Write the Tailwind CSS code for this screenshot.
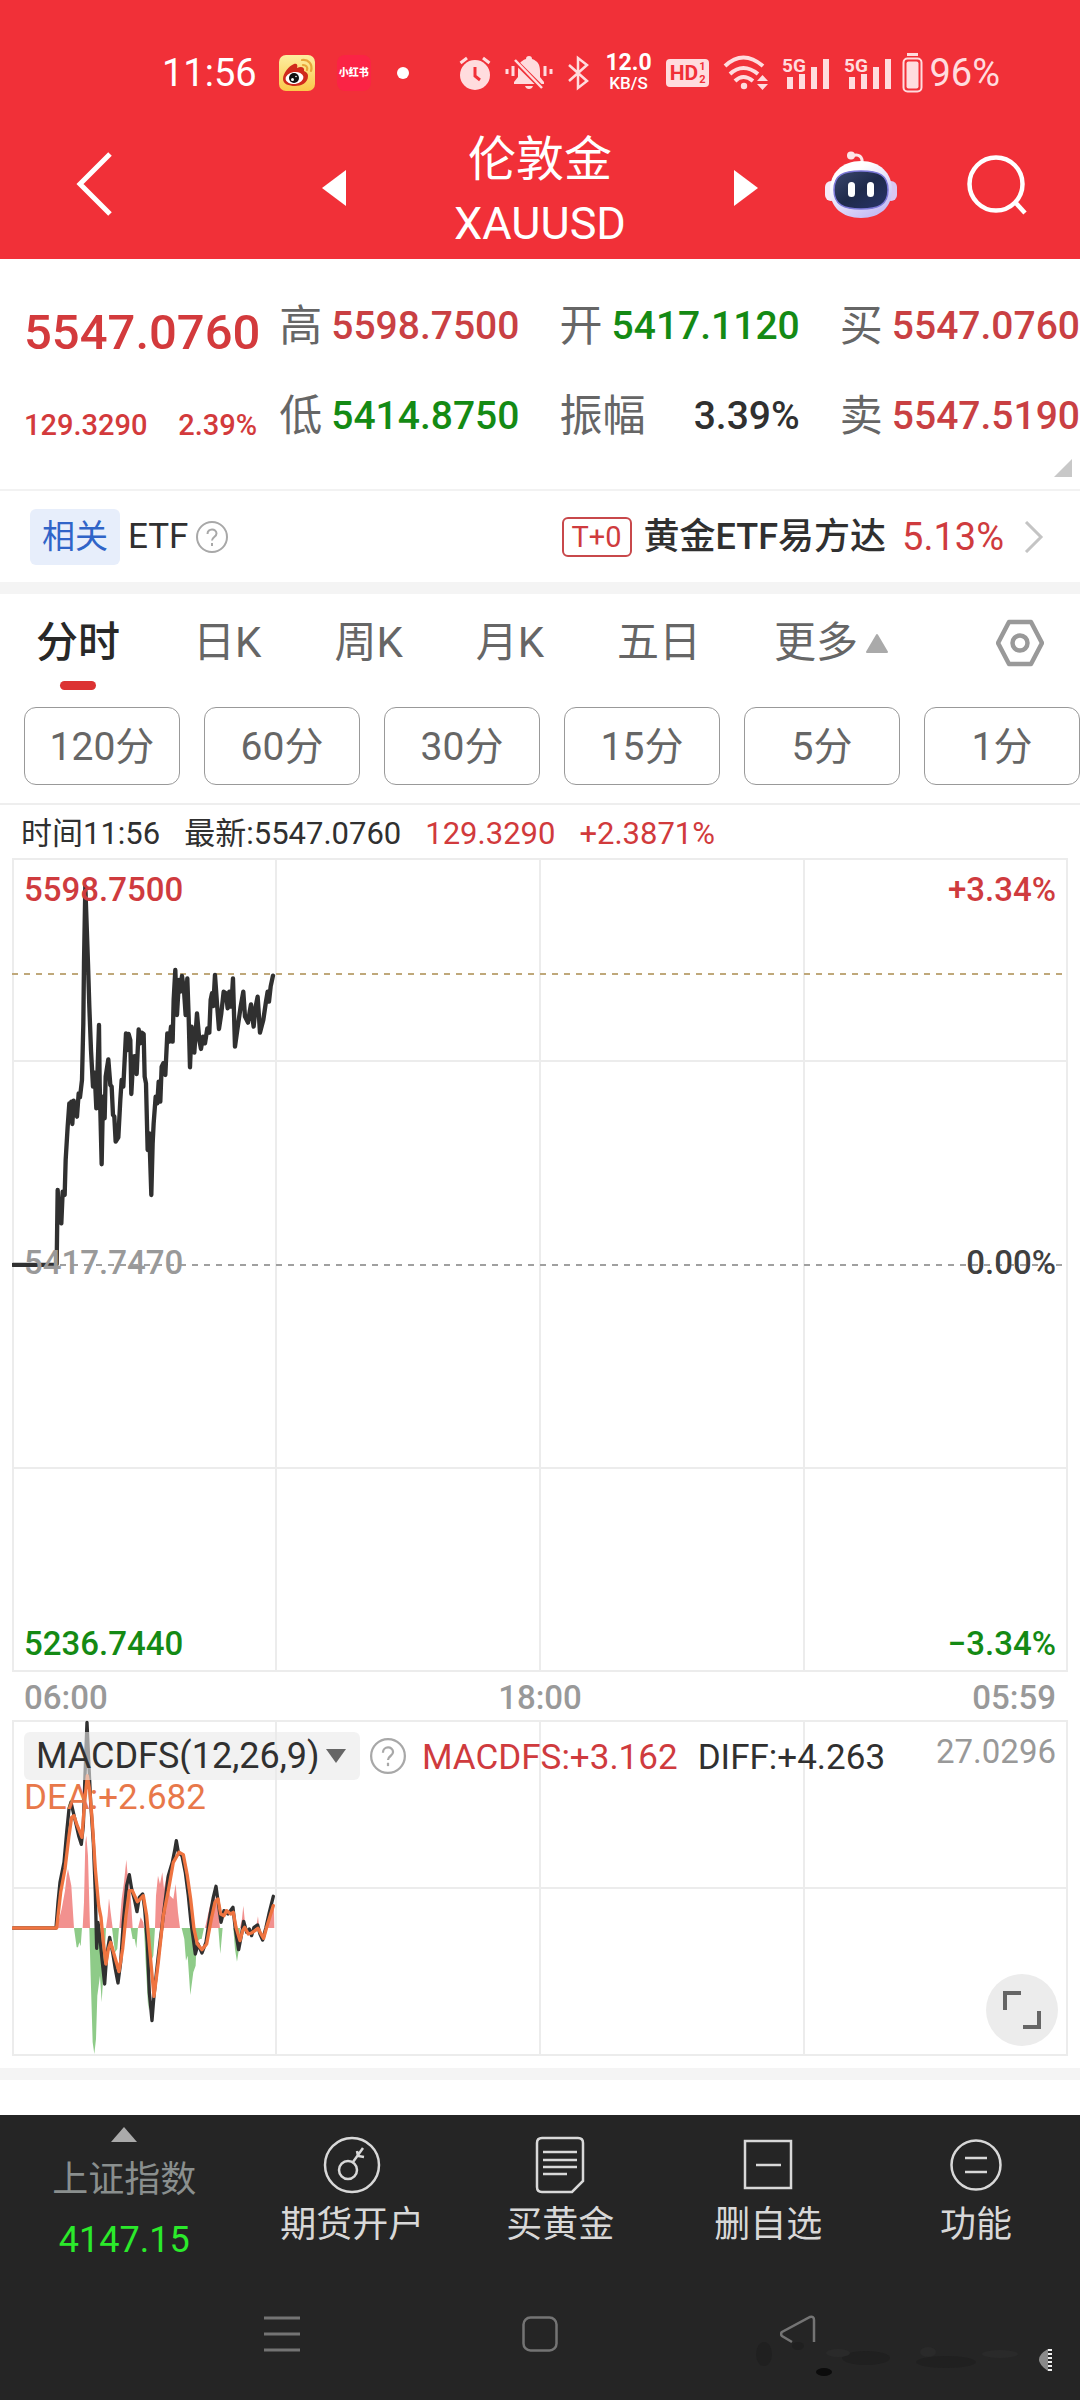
<!DOCTYPE html>
<html lang="zh-CN">
<head>
<meta charset="utf-8">
<meta name="viewport" content="width=device-width, initial-scale=1">
<title>伦敦金 XAUUSD</title>
<script src="https://cdn.jsdelivr.net/npm/@tailwindcss/browser@4"></script>
</head>
<body class="flex min-h-screen flex-col overflow-x-hidden bg-white font-['Roboto','Noto_Sans_CJK_SC',sans-serif] text-[#303030]">

<header class="bg-[#f13038] text-white">
  <!-- status bar -->
  <div class="flex h-[122px] items-center justify-between pt-6 pr-[80px] pl-[162px]">
    <div class="flex items-center gap-[22px]">
      <span class="text-[38px] leading-12">11:56</span>
      <svg class="size-9" viewBox="0 0 36 36">
        <defs><linearGradient id="wb" x1="0" y1="0" x2="0" y2="1"><stop offset="0" stop-color="#fdeea0"/><stop offset="1" stop-color="#fbc84a"/></linearGradient></defs>
        <rect width="36" height="36" rx="7" fill="url(#wb)"/>
        <path d="M4 24c0-6 6-13 11-15 3-1 4 1 3 4 4-2 8-1 7 3 3 1 4 3 4 5 0 7-7 10-13 10S4 29 4 24z" fill="#d02a1c"/>
        <ellipse cx="15.500" cy="23" rx="9" ry="6" fill="#fff" transform="rotate(-8 15.500 23)"/>
        <circle cx="15" cy="23" r="5" fill="#111"/><circle cx="13.500" cy="24.500" r="1.500" fill="#fff"/><circle cx="17" cy="21.500" r=".8" fill="#fff"/>
        <path d="M23 5c6-1 11 4 9 11M24 10c3 0 5 2 4 5" fill="none" stroke="#e7a63a" stroke-width="2.200" stroke-linecap="round"/>
      </svg>
      <span class="grid h-9 w-[34px] place-items-center rounded-lg bg-[#fb2345] text-[10px] leading-3 font-black">小红书</span>
      <span class="ml-1 size-3 rounded-full bg-white"></span>
    </div>
    <div class="flex items-center gap-3.5 text-[#ffdcde]">
      <svg class="h-9 w-8" viewBox="0 0 32 36" fill="currentColor">
        <circle cx="16" cy="20" r="15"/><path d="M1.500 8 8 3M30.500 8 24 3" stroke="currentColor" stroke-width="3"/>
        <path d="M16 12v9l5 4" fill="none" stroke="#f13038" stroke-width="3"/>
      </svg>
      <svg class="h-9 w-12" viewBox="0 0 48 36" fill="currentColor">
        <path d="M24 1c2 0 3 1 3 3 6 2 8 6 8 12v6l4 5v2H9v-2l4-5v-6c0-6 2-10 8-12 0-2 1-3 3-3zM20 31h8q-1 3-4 3t-4-3z"/>
        <path d="M8 4 38 34" stroke="#f13038" stroke-width="5"/><path d="M10 5 37 33" stroke="currentColor" stroke-width="2.500"/>
        <path d="M2 14v5M8 11v10M40 11v10M46 14v5" stroke="currentColor" stroke-width="3"/>
      </svg>
      <svg class="h-9 w-6" viewBox="0 0 24 36" fill="none" stroke="currentColor" stroke-width="2.500"><path d="M2 10 20 26 11 33V3l9 7L2 26"/></svg>
      <div class="text-center text-white">
        <div class="text-[23px] leading-5 font-bold">12.0</div><div class="text-[17px] leading-5 font-medium">KB/S</div>
      </div>
      <div class="flex h-7 items-center gap-px rounded-sm bg-[#ffdcde] px-1 text-[#f13038]">
        <span class="text-[21px] leading-7 font-bold">HD</span>
        <span class="flex flex-col text-[11px] leading-[13px] font-bold"><span>1</span><span>2</span></span>
      </div>
      <svg class="h-9 w-[45px]" viewBox="0 0 45 36" fill="none" stroke="currentColor" stroke-width="4">
        <path d="M2 11q18-17 38 0M7 19q13-12 28 0M12 26q8-8 18 0"/><circle cx="21" cy="31" r="3.200" fill="currentColor" stroke="none"/>
        <path d="M34 26h11l-5.500-6zM34 29h11l-5.500 6z" fill="currentColor" stroke="none"/>
      </svg>
      <svg class="h-9 w-12 overflow-visible" viewBox="0 0 48 36" fill="currentColor">
        <text x="0" y="17" font-size="19" font-weight="700">5G</text>
        <path d="M5 22h6v12H5zM17 19h6v15h-6zM29 12h6v22h-6zM41 4h6v30h-6z"/>
      </svg>
      <svg class="h-9 w-12 overflow-visible" viewBox="0 0 48 36" fill="currentColor">
        <text x="0" y="17" font-size="19" font-weight="700">5G</text>
        <path d="M5 22h6v12H5zM17 19h6v15h-6zM29 12h6v22h-6zM41 4h6v30h-6z"/>
      </svg>
      <div class="-ml-1 flex items-center gap-1.5">
        <svg class="h-10 w-[21px]" viewBox="0 0 21 40"><path d="M5 1.500h11" stroke="currentColor" stroke-width="3"/><rect x="1.500" y="5.500" width="18" height="33" rx="4" fill="none" stroke="currentColor" stroke-width="2"/><rect x="4.500" y="8.500" width="12" height="27" rx="2" fill="currentColor"/></svg>
        <span class="text-[38px] leading-12">96%</span>
      </div>
    </div>
  </div>
  <!-- title bar -->
  <div class="grid h-[137px] grid-cols-[28%_1fr_28%] items-start">
    <div class="pt-[29px] pl-[76px]">
      <button aria-label="返回" class="block"><svg class="h-[66px] w-9" viewBox="0 0 36 66" fill="none" stroke="#fff" stroke-width="5"><path d="M34 3 4 33l30 30"/></svg></button>
    </div>
    <div class="flex items-start justify-between px-5">
      <button aria-label="上一个" class="mt-12"><svg class="h-9 w-6" viewBox="0 0 24 36"><path d="M24 0v36L0 18z" fill="#fff"/></svg></button>
      <h1 class="pt-1.5 text-center"><span class="block text-[48px] leading-16">伦敦金</span><span class="block text-[45px] leading-16">XAUUSD</span></h1>
      <button aria-label="下一个" class="mt-12"><svg class="h-9 w-6" viewBox="0 0 24 36"><path d="M0 0v36l24-18z" fill="#fff"/></svg></button>
    </div>
    <div class="flex items-center justify-between pt-7 pr-[52px] pl-[46px]">
      <button aria-label="智能助手"><svg class="h-[68px] w-[74px]" viewBox="0 0 74 68">
        <defs><linearGradient id="rb" x1="0" y1="0" x2=".6" y2="1"><stop offset=".3" stop-color="#fff"/><stop offset="1" stop-color="#c6bdf5"/></linearGradient>
        <linearGradient id="rf" x1="0" y1="0" x2="1" y2="1"><stop offset="0" stop-color="#3b486e"/><stop offset=".5" stop-color="#1f2a4b"/><stop offset="1" stop-color="#27336a"/></linearGradient></defs>
        <path d="M28 6c7-3 11 1 10 8" fill="none" stroke="#fde6e8" stroke-width="3"/><circle cx="27" cy="5.500" r="4" fill="#fde6e8"/>
        <rect x="1" y="31" width="12" height="20" rx="6" fill="#f6e9f7"/><rect x="61" y="31" width="12" height="20" rx="6" fill="#d9c6f2"/>
        <path d="M37 11c19 0 31 12 31 29S56 68 37 68 6 57 6 40 18 11 37 11z" fill="url(#rb)"/>
        <path d="M37 21c18 0 27 4 27 19S54 59 37 59 10 55 10 40s9-19 27-19z" fill="url(#rf)" stroke="#7c78d8" stroke-width="1.500"/>
        <rect x="24" y="32" width="7" height="15" rx="3.500" fill="#fff"/><rect x="43" y="32" width="7" height="15" rx="3.500" fill="#fff"/>
      </svg></button>
      <button aria-label="搜索"><svg class="size-[62px]" viewBox="0 0 62 62" fill="none" stroke="#fff" stroke-width="4.500"><circle cx="30" cy="31" r="26.500"/><path d="m49 49 10 11"/></svg></button>
    </div>
  </div>
</header>

<main class="flex-1">
  <!-- quote -->
  <section class="relative flex h-[232px] border-b-2 border-[#f2f2f2] pt-[34px] text-[39px] font-medium">
    <div class="w-[24%] pl-6 text-[#d33a3c]">
      <div class="pt-2 text-[49px] leading-16">5547.0760</div>
      <div class="flex justify-between pt-9 pr-0.5 text-[29px] leading-12"><span>129.3290</span><span>2.39%</span></div>
    </div>
    <dl class="grid flex-1 grid-cols-3 grid-rows-[66px_66px] gap-x-10 gap-y-6 pl-[20px] whitespace-nowrap text-[#c94043]">
      <div class="flex items-center justify-between"><dt class="text-[43px] font-normal text-[#666]">高</dt><dd>5598.7500</dd></div>
      <div class="flex items-center justify-between"><dt class="text-[43px] font-normal text-[#666]">开</dt><dd class="text-[#148a14]">5417.1120</dd></div>
      <div class="flex items-center justify-between"><dt class="text-[43px] font-normal text-[#666]">买</dt><dd>5547.0760</dd></div>
      <div class="flex items-center justify-between"><dt class="text-[43px] font-normal text-[#666]">低</dt><dd class="text-[#148a14]">5414.8750</dd></div>
      <div class="flex items-center justify-between"><dt class="text-[43px] font-normal text-[#666]">振幅</dt><dd class="text-[#303030]">3.39%</dd></div>
      <div class="flex items-center justify-between"><dt class="text-[43px] font-normal text-[#666]">卖</dt><dd>5547.5190</dd></div>
    </dl>
    <svg class="absolute right-2 bottom-3 size-[18px]" viewBox="0 0 18 18"><path d="M18 0v18H0z" fill="#c8c8c8"/></svg>
  </section>

  <!-- related ETF -->
  <section class="flex h-[103px] items-center justify-between border-b-12 border-[#f4f4f4] pr-9 pl-[30px]">
    <div class="flex items-center gap-2">
      <span class="rounded-md bg-[#e7eefb] px-3 text-[33px] leading-14 text-[#3064c8]">相关</span>
      <span class="text-[35px] leading-14">ETF</span>
      <svg class="size-8" viewBox="0 0 32 32" fill="none" stroke="#a8a8a8" stroke-width="2"><circle cx="16" cy="16" r="15"/><path d="M11.500 13c0-6 9-6 9-.5 0 3.500-4.500 3.500-4.500 7"/><path d="M16 22v3"/></svg>
    </div>
    <a href="#" class="flex items-center">
      <span class="rounded-md border-2 border-[#c8484b] px-2 text-[29px] leading-9 text-[#cf3b3e]">T+0</span>
      <span class="ml-3 text-[36px] leading-14 font-medium">黄金ETF易方达</span>
      <span class="ml-4 text-[38px] leading-14 text-[#cf3b3e]">5.13%</span>
      <svg class="ml-5 h-8 w-5" viewBox="0 0 20 32" fill="none" stroke="#c4c4c4" stroke-width="3"><path d="m2 1 15 15L2 31"/></svg>
    </a>
  </section>

  <!-- period tabs -->
  <nav class="flex h-[113px] justify-between pt-[21px] pr-9 pl-9 text-[42px] leading-14 text-[#666]">
    <div class="flex items-start gap-[73px]">
      <button class="flex flex-col items-center gap-2.5 font-medium text-[#282828]">分时<span class="h-[9px] w-9 rounded-full bg-[#dc3232]"></span></button>
      <button>日K</button><button>周K</button><button>月K</button><button>五日</button>
      <button class="flex items-center gap-2">更多<svg class="h-5 w-[22px]" viewBox="0 0 22 20"><path d="M11 2 21 19H1z" fill="#aaa" stroke="#aaa" stroke-width="2" stroke-linejoin="round"/></svg></button>
    </div>
    <button aria-label="设置" class="mt-1 self-start"><svg class="h-12 w-12" viewBox="0 0 48 48" fill="none" stroke="#999" stroke-width="4.500" stroke-linejoin="round"><path d="M13 3h22l11 21-11 21H13L2 24z"/><circle cx="24" cy="24" r="7.500"/></svg></button>
  </nav>
  <div class="grid grid-cols-6 gap-6 border-b-2 border-[#eee] pb-[18px] pl-6 text-[39px] text-[#666]">
    <button class="h-[78px] rounded-xl border border-[#999] pt-0.5">120分</button>
    <button class="h-[78px] rounded-xl border border-[#999] pt-0.5">60分</button>
    <button class="h-[78px] rounded-xl border border-[#999] pt-0.5">30分</button>
    <button class="h-[78px] rounded-xl border border-[#999] pt-0.5">15分</button>
    <button class="h-[78px] rounded-xl border border-[#999] pt-0.5">5分</button>
    <button class="h-[78px] rounded-xl border border-[#999] pt-0.5">1分</button>
  </div>

  <p class="flex h-[53px] items-center gap-6 pt-1 pl-[21px] text-[31px] leading-12">
    <span>时间11:56</span><span>最新:5547.0760</span><span class="text-[#d13a3c]">129.3290</span><span class="text-[#d13a3c]">+2.3871%</span>
  </p>

  <!-- price chart -->
  <section class="mx-3 grid text-[33px] leading-10 font-medium">
    <svg class="col-start-1 row-start-1 block w-full" viewBox="0 0 1056 814">
      <path d="M1 1h1054v812H1zM264 1v812M528 1v812M792 1v812M1 203h1054M1 610h1054" fill="none" stroke="#ececec" stroke-width="2"/>
      <path d="M0 116h1056" stroke="#bfa87a" stroke-width="2" stroke-dasharray="6 6"/>
      <path d="M0 407h1056" stroke="#a0a0a0" stroke-width="2" stroke-dasharray="6 6"/>
      <g transform="translate(-12 -8) scale(.3333)"><path fill="none" stroke="#303030" stroke-width="13" stroke-linejoin="round" stroke-linecap="round" d="M40 1245 165 1245 170 1243 173 1020 178 1110 184 1120 188 1025 194 1035 197 930 203 830 208 760 211 810 214 755 217 822 221 752 226 790 231 800 236 730 240 742 246 690 250 520 252 340 256 110 264 340 268 470 273 600 279 710 284 668 289 775 297 525 299 700 305 943 309 740 314 805 317 680 325 628 331 705 335 710 339 795 343 800 347 875 355 862 361 750 365 690 370 710 378 550 382 600 386 552 391 570 394 732 400 620 406 618 410 672 416 538 421 580 425 548 431 552 434 680 438 700 443 900 448 850 454 1035 458 880 461 820 467 740 472 760 476 695 481 755 485 650 490 640 496 675 502 550 508 575 513 530 518 575 521 450 526 360 531 495 537 390 541 425 546 378 552 420 557 495 562 385 566 500 570 652 575 530 583 608 591 490 598 570 603 597 609 560 615 580 622 535 628 548 632 450 636 430 640 468 645 375 651 460 657 537 664 490 671 425 678 430 683 475 688 425 694 470 699 385 705 590 712 540 722 470 730 425 735 500 744 518 750 480 753 463 757 500 761 530 767 470 773 440 777 500 780 548 790 510 798 455 803 425 807 455 812 410 819 377"/></g>
    </svg>
    <div class="z-10 col-start-1 row-start-1 flex flex-col justify-between px-3 pt-3 pb-2">
      <div class="flex justify-between text-[#cf3b3e]"><span>5598.7500</span><span>+3.34%</span></div>
      <div class="flex justify-between pb-2 text-[#999]"><span>5417.7470</span><span class="text-[#404040]">0.00%</span></div>
      <div class="flex justify-between text-[#148a14]"><span>5236.7440</span><span>−3.34%</span></div>
    </div>
  </section>
  <div class="grid h-12 grid-cols-3 items-center px-6 pt-0.5 text-[33px] leading-12 font-medium text-[#999]">
    <span>06:00</span><span class="text-center">18:00</span><span class="text-right">05:59</span>
  </div>

  <!-- MACD chart -->
  <section class="relative mx-3 grid">
    <svg class="col-start-1 row-start-1 block w-full" viewBox="0 0 1056 336">
      <path d="M1 1h1054v334H1zM264 1v334M528 1v334M792 1v334M1 168h1054" fill="none" stroke="#ececec" stroke-width="2"/>
      <g transform="translate(-12 -11) scale(.3333)">
        <path fill="#f2918f" d="M170 657 185 600 195 545 200 500 204 480 214 530 222 657ZM248 657 252 580 256 400 259 380 264 440 270 657ZM318 657 323 620 327 568 332 610 338 657ZM358 657 365 570 372 520 379 452 384 510 392 560 398 657ZM414 657 422 625 430 640 432 657ZM465 657 468 560 474 500 480 525 487 490 492 540 500 500 510 560 520 570 527 525 534 610 540 657ZM615 657 630 590 645 560 655 610 660 657ZM720 657 726 630 730 590 735 640 740 657ZM768 657 774 622 778 657ZM795 657 808 600 815 580 822 590 823 657Z"/>
        <path fill="#8ecb88" d="M222 657 230 715 234 715 238 700 242 712 246 657ZM268 657 272 800 278 1000 283 1035 288 990 292 860 300 800 305 880 310 800 315 720 318 657ZM336 657 345 730 352 720 357 657ZM392 657 398 690 404 690 409 718 414 657ZM432 657 437 760 445 905 452 760 460 740 465 657ZM545 657 553 690 558 755 563 740 571 858 580 790 587 770 590 700 600 690 605 690 612 657ZM655 657 661 735 668 657ZM700 657 705 720 711 758 717 720 720 657Z"/>
        <g fill="none" stroke-width="10" stroke-linejoin="round" stroke-linecap="round">
          <path stroke="#303030" d="M40 657 168 657 174 580 180 520 192 460 200 370 207 300 213 280 220 310 228 345 236 380 244 406 250 350 255 200 261 40 266 150 272 280 280 400 286 550 290 718 294 640 300 690 307 760 314 825 320 740 329 685 338 730 346 780 354 822 362 760 370 640 380 530 388 497 395 540 403 570 411 608 418 565 428 555 434 600 442 700 448 850 456 935 462 860 475 740 490 620 505 500 517 460 524 425 529 395 535 430 546 440 556 490 565 560 573 640 580 690 586 735 594 705 606 732 618 700 630 620 640 565 648 532 656 590 663 640 672 605 684 615 699 595 706 660 716 722 724 680 731 637 740 670 748 660 755 680 762 655 773 648 780 675 788 693 798 655 808 610 820 562"/>
          <path stroke="#ef7440" d="M40 657 170 657 182 550 195 480 207 380 215 325 222 320 232 350 246 385 253 290 262 200 270 250 277 340 286 480 296 590 303 625 310 700 318 765 325 720 332 700 342 735 357 788 368 720 378 620 388 545 397 545 412 578 421 570 430 560 440 620 450 730 462 862 475 760 490 620 505 545 520 460 537 430 550 437 562 500 572 570 582 660 592 705 606 722 620 705 634 630 645 580 654 570 662 615 672 620 680 605 692 615 700 610 708 655 720 695 728 665 734 655 745 675 755 672 765 665 774 658 783 675 791 688 800 655 820 590"/>
        </g>
      </g>
    </svg>
    <div class="z-10 col-start-1 row-start-1 px-3 pt-3 text-[35px] leading-9">
      <div class="flex items-center">
        <div class="relative">
          <select aria-label="指标" class="block h-12 w-[336px] appearance-none rounded-md bg-[#e9e9e9]/60 pl-3 text-[36px]">
            <option>MACDFS(12,26,9)</option>
          </select>
          <svg class="pointer-events-none absolute top-[17px] right-3.5 h-3.5 w-5" viewBox="0 0 20 14"><path d="M0 0h20L10 14z" fill="#666"/></svg>
        </div>
        <svg class="ml-2.5 size-9" viewBox="0 0 32 32" fill="none" stroke="#a8a8a8" stroke-width="2"><circle cx="16" cy="16" r="15"/><path d="M11.500 13c0-6 9-6 9-.5 0 3.500-4.500 3.500-4.500 7"/><path d="M16 22v3"/></svg>
        <span class="ml-4 pt-1 text-[#cf3b3e]">MACDFS:+3.162</span>
        <span class="ml-5 pt-1">DIFF:+4.263</span>
        <span class="mb-2 ml-auto text-[33px] text-[#999]">27.0296</span>
      </div>
      <div class="text-[#e8784a]">DEA:+2.682</div>
    </div>
    <button aria-label="全屏" class="absolute right-2.5 bottom-2.5 z-10 grid size-[72px] place-items-center rounded-full bg-[#ececec]"><svg class="size-[38px]" viewBox="0 0 38 38" fill="none" stroke="#666" stroke-width="4"><path d="M2 19V2h16M36 20v16H20"/></svg></button>
  </section>
  <div class="mt-3 h-3 bg-[#f4f4f4]"></div>
  <div class="h-[34px]"></div>
</main>

<footer class="bg-[#252525] text-[36px] leading-12 text-[#d8d8d8]">
  <div class="grid h-[174px] grid-cols-[23%_1fr_1fr_1fr_1fr]">
    <a href="#" class="flex flex-col items-center pt-3">
      <svg class="h-[15px] w-[26px]" viewBox="0 0 26 15"><path d="M13 0 26 15H0z" fill="#aaa"/></svg>
      <span class="mt-3.5 text-[#8a8f8e]">上证指数</span>
      <span class="mt-3 text-[#2bea2b]">4147.15</span>
    </a>
    <button class="flex flex-col items-center gap-1.5 pt-5">
      <svg class="size-15" viewBox="0 0 60 60" fill="none" stroke="currentColor" stroke-width="2.500"><circle cx="30" cy="30" r="27"/><circle cx="26" cy="35" r="9"/><path d="m31 27 10-14M35 16l1 5 6 1" /></svg><span>期货开户</span>
    </button>
    <button class="flex flex-col items-center gap-1.5 pt-5">
      <svg class="size-15" viewBox="0 0 60 60" fill="none" stroke="currentColor" stroke-width="2.500"><path d="M12 3h36q5 0 5 5v38L42 57H12q-5 0-5-5V8q0-5 5-5zM13 17h34M13 25h34M13 32h34M13 39h24"/></svg><span>买黄金</span>
    </button>
    <button class="flex flex-col items-center gap-1.5 pt-5">
      <svg class="size-15" viewBox="0 0 60 60" fill="none" stroke="currentColor" stroke-width="2.500"><path d="M7 6h46v47H7zM18 30h25"/></svg><span>删自选</span>
    </button>
    <button class="flex flex-col items-center gap-1.5 pt-5">
      <svg class="size-15" viewBox="0 0 60 60" fill="none" stroke="currentColor" stroke-width="2.500"><circle cx="30" cy="30" r="24.500"/><path d="M19 23h22M19 37h22"/></svg><span>功能</span>
    </button>
  </div>
  <div class="relative flex h-[111px] justify-between px-[264px] pt-[26px] text-[#747474]">
    <button aria-label="最近任务" class="self-start"><svg class="h-10 w-9" viewBox="0 0 36 40" stroke="currentColor" stroke-width="3"><path d="M0 3h36M0 19h36M0 35h36"/></svg></button>
    <button aria-label="主屏幕" class="self-start"><svg class="h-10 w-9" viewBox="0 0 36 40" fill="none" stroke="currentColor" stroke-width="2.500"><rect x="1.500" y="2.500" width="33" height="33" rx="7"/></svg></button>
    <button aria-label="后退" class="self-start"><svg class="h-10 w-9" viewBox="0 0 36 40" fill="none" stroke="currentColor" stroke-width="2.500"><path d="M12 27 2 21q-2-2 0-4L30 2q4-1 4 3v22"/></svg></button>
    <svg class="pointer-events-none absolute right-6 bottom-6 h-9 w-[310px]" viewBox="0 0 310 36">
      <g fill="#202020"><ellipse cx="18" cy="14" rx="8" ry="12"/><ellipse cx="78" cy="32" rx="8" ry="4" fill="#0c0c0c"/><ellipse cx="52" cy="6" rx="6" ry="4"/><ellipse cx="120" cy="18" rx="24" ry="7"/><ellipse cx="200" cy="22" rx="30" ry="6"/></g>
      <g fill="#2a2a2a"><ellipse cx="92" cy="13" rx="12" ry="4"/><ellipse cx="182" cy="12" rx="8" ry="5"/><ellipse cx="254" cy="14" rx="18" ry="4"/></g>
      <path d="M302 9q-18 10 0 22z" fill="#8a8a8a"/><path d="M304 9v22" stroke="#eee" stroke-width="4" stroke-dasharray="2 2"/>
    </svg>
  </div>
</footer>
</body>
</html>
